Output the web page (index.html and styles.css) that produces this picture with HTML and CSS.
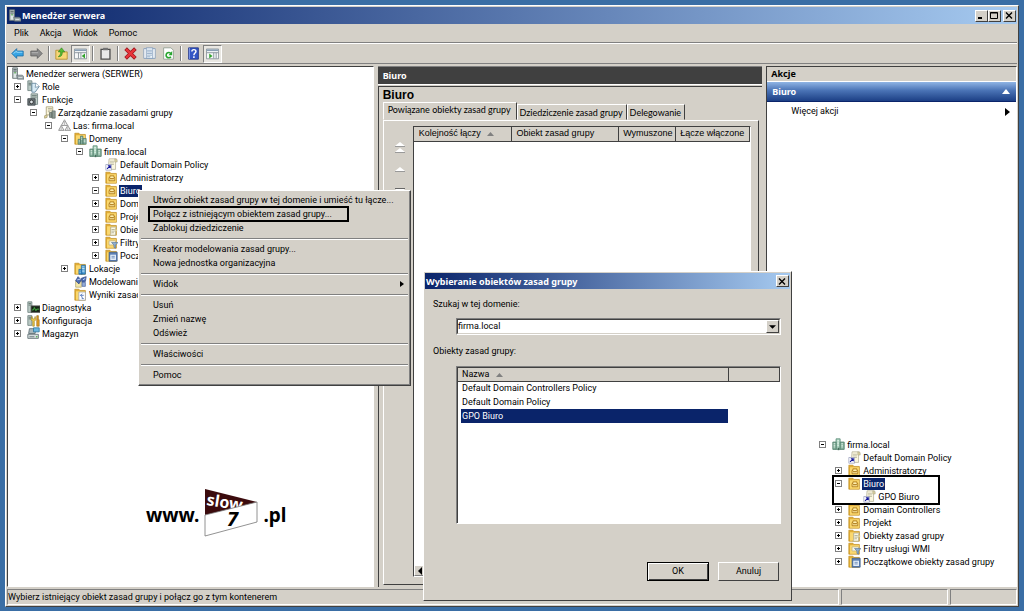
FILE: index.html
```html
<!DOCTYPE html>
<html lang="pl">
<head>
<meta charset="utf-8">
<title>Menedżer serwera</title>
<link rel="stylesheet" href="styles.css">
</head>
<body>
<svg class="defs" aria-hidden="true">
  <symbol id="server" viewBox="0 0 16 16"><path d="M2 1h6v13H2z" fill="#b9c3c4" stroke="#6b7778"/><path d="M3 3h4M3 5h4" stroke="#4d5a5c"/><path d="M3.500 8h3v5h-3z" fill="#dfe7e6"/><path d="M7 10l7 0 2 2v3H8z" fill="#9aa5a8" stroke="#59656a" stroke-width=".7"/><path d="M9 13h5" stroke="#e8eded"/><circle cx="5" cy="7" r="1" fill="#55b24a"/></symbol>
  <symbol id="role" viewBox="0 0 16 16"><path d="M1 1h5v12H1z" fill="#b9c9c4" stroke="#6f8380"/><path d="M2 4h3M2 6h3" stroke="#51635f"/><path d="M6 4h5l4 4-5 7H6z" fill="#d8ebf5" stroke="#5c7f96"/><path d="M11 4l-1 5 5-1" fill="#fff" stroke="#5c7f96" stroke-width=".8"/></symbol>
  <symbol id="feature" viewBox="0 0 16 16"><path d="M5 1h8v13H5z" fill="#c1cec9" stroke="#6f8380"/><path d="M6 3h6M6 5h6" stroke="#64756f"/><path d="M1 7h9v8H1z" fill="#6a7377" stroke="#3d464a"/><circle cx="5.500" cy="11" r="2.300" fill="#dfe6e8" stroke="#222"/></symbol>
  <symbol id="gpm" viewBox="0 0 16 16"><path d="M4 1h8v10H4z" fill="#fdf8dd" stroke="#a59d74"/><path d="M6 3h5M6 5h5M6 7h3" stroke="#a9a58c"/><path d="M2 12l3-1v3l-3 1z" fill="#e8dc9c" stroke="#a59d74"/><path d="M8 8h3v6H8zM11 6h4v9h-4z" fill="#8d9a94" stroke="#59665f" stroke-width=".8"/></symbol>
  <symbol id="forest" viewBox="0 0 16 16"><path d="M8 1l4 7H4zM4 8l3.500 6H.800zM12 8l3.500 6H8.500z" fill="#eee" stroke="#858585"/><path d="M8 1v7M12 8v6M4 8v6" stroke="#b4b4b4"/></symbol>
  <symbol id="folder" viewBox="0 0 16 16"><path d="M1 3V1.500h5L7.500 3H14v12H1z" fill="#e3ae35" stroke="#bd8a1a" stroke-width=".8"/><path d="M2.500 4H13.500v10.500h-11z" fill="#fad870"/></symbol>
  <symbol id="domain" viewBox="0 0 16 16"><path d="M5 1h5v13H5z" fill="#a9d1bd" stroke="#5a8c76"/><path d="M1 5h4v9H1zM10 5h5v9h-5z" fill="#86b29d" stroke="#507c69"/><path d="M6.500 3h2M6.500 5h2M6.500 7h2M6.500 9h2M2 7h2M2 9h2M2 11h2M11.500 7h2M11.500 9h2M11.500 11h2" stroke="#eefaf2"/><path d="M7 12h2v3H7z" fill="#466c5c"/></symbol>
  <symbol id="domains" viewBox="0 0 16 16"><use href="#folder"/><path d="M8 5h3v10H8zM5 9h3v6H5zM11 8h4v7h-4z" fill="#83ad9b" stroke="#4f7766" stroke-width=".8"/><path d="M9 7h1M9 9h1M12 10h2M12 12h2M6 11h1" stroke="#effaf3"/></symbol>
  <symbol id="link" viewBox="0 0 16 16"><path d="M5 1h9l-1 3v10H4z" fill="#fbf7df" stroke="#a9a488" stroke-width=".8"/><path d="M12 1l3 1v3h-3z" fill="#d7ce9c" stroke="#a9a488" stroke-width=".6"/><path d="M6 4h5M6 6h5M6 8h5" stroke="#b9b69f"/><path d="M1 8h7v7H1z" fill="#fff" stroke="#8c93b5" stroke-width=".8"/><path d="M2.500 13.500L6 10M3.500 9.500h3v3" fill="none" stroke="#15189b" stroke-width="1.400"/></symbol>
  <symbol id="ou" viewBox="0 0 16 16"><use href="#folder"/><path d="M6 6h5v2h1v4H5V8h1z" fill="#fff0ad" stroke="#a8700c"/><path d="M6 9.500h5" stroke="#a8700c" stroke-width="1.300"/></symbol>
  <symbol id="gpofolder" viewBox="0 0 16 16"><use href="#folder"/><path d="M7 5h7l-1 2v8H6l1-2z" fill="#fcf9e4" stroke="#9f9a80" stroke-width=".8"/><path d="M8 8h4M8 10h4M8 12h3" stroke="#aaa791"/><path d="M12 8h3v2h-3z" fill="#ddd09a"/></symbol>
  <symbol id="wmi" viewBox="0 0 16 16"><use href="#folder"/><path d="M5 6h8v5H5z" fill="#f9f7e4" stroke="#aaa27a" stroke-width=".7"/><path d="M8 8h8l-3 3v4l-2-1v-3z" fill="#8eaed1" stroke="#4d6d93" stroke-width=".7"/></symbol>
  <symbol id="starter" viewBox="0 0 16 16"><use href="#folder"/><path d="M5 4h10v11H5z" fill="#5b7fb4" stroke="#33547f" stroke-width=".8"/><path d="M6.500 7h7v6.500h-7z" fill="#e8f1fa"/><path d="M8 9h4M8 11h4" stroke="#5b7fb4"/></symbol>
  <symbol id="sites" viewBox="0 0 16 16"><use href="#folder"/><path d="M9 4h5v11H9zM6 9h4v6H6z" fill="#3d93cf" stroke="#2268a0" stroke-width=".8"/><path d="M10 6h3M10 8h3M10 10h3M10 12h3M7 11h1M7 13h1" stroke="#d5efff"/></symbol>
  <symbol id="model" viewBox="0 0 16 16"><path d="M2 7h7v8H2z" fill="#f3e7a8" stroke="#a59a61" stroke-width=".8"/><path d="M5 2l4 4-3 5-4-4zM9 4l6-2-1 6-4 1z" fill="#4a6bb1" stroke="#283f7d" stroke-width=".8"/><path d="M10 9h4v5h-4z" fill="#93acd8" stroke="#455f9b" stroke-width=".8"/><path d="M4 6l4-1M11 6l3-2" stroke="#d8e4ff"/></symbol>
  <symbol id="results" viewBox="0 0 16 16"><use href="#folder"/><path d="M6 5h8v10H6z" fill="#fff" stroke="#8f9bb0" stroke-width=".8"/><path d="M12 9H8M10 7l-2 2 2 2v2h2" fill="none" stroke="#3b65b4"/></symbol>
  <symbol id="diag" viewBox="0 0 16 16"><path d="M1 1h5v13H1z" fill="#b9c9c4" stroke="#6f8380"/><path d="M2 3h3M2 5h3" stroke="#55665f"/><path d="M5 6h11v8H5z" fill="#172417" stroke="#555"/><path d="M6 11h2l1-3 2 4 1-2h3" fill="none" stroke="#50c94d"/></symbol>
  <symbol id="config" viewBox="0 0 16 16"><path d="M1 2h5v12H1z" fill="#b9c9c4" stroke="#6f8380"/><path d="M2 4h3M2 6h3" stroke="#55665f"/><path d="M6 3l1 3h2l1-3 1 4-2 2v6H7V9L5 7z" fill="#eac94b" stroke="#9a7a12" stroke-width=".7"/><path d="M12 2h2v5h1v8h-3V7h0z" fill="#e39c22" stroke="#8f6311" stroke-width=".7"/></symbol>
  <symbol id="storage" viewBox="0 0 16 16"><path d="M3 2h8l-1 6H2z" fill="#a9b7bb" stroke="#5c6c71"/><path d="M8 1h7v5H8z" fill="#6cb7df" stroke="#33759a"/><path d="M1 9h13v5H1z" fill="#d4dcdd" stroke="#5c6c71"/><path d="M3 12h6" stroke="#59696e"/><circle cx="12" cy="12" r="1" fill="#4dab46"/></symbol>
</svg>

<div class="window">
  <header class="titlebar">
    <svg class="ico"><use href="#server"/></svg>
    <h1>Menedżer serwera</h1>
    <button class="cap" aria-label="Minimalizuj"><svg viewBox="0 0 10 9"><path d="M2 7h4" stroke="#000" stroke-width="2"/></svg></button>
    <button class="cap" aria-label="Maksymalizuj"><svg viewBox="0 0 10 9"><path d="M1.500 1.500h7v6h-7zM1.500 2h7" fill="none" stroke="#000"/></svg></button>
    <button class="cap cap-close" aria-label="Zamknij"><svg viewBox="0 0 10 9"><path d="M2 1.500l6 6M8 1.500l-6 6" stroke="#000" stroke-width="1.400"/></svg></button>
  </header>
  <nav class="menubar">
    <button>Plik</button><button>Akcja</button><button>Widok</button><button>Pomoc</button>
  </nav>
  <div class="toolbar">
    <button aria-label="Wstecz"><svg viewBox="0 0 16 16"><path d="M1 8l6-6v3h8v6H7v3z" fill="#36a4e4" stroke="#1a6ca6"/><path d="M3 8l4-3v1.500h7" fill="none" stroke="#a4defa"/></svg></button>
    <button aria-label="Dalej"><svg viewBox="0 0 16 16"><path d="M15 8L9 2v3H1v6h8v3z" fill="#8c8c8c" stroke="#5e5e5e"/><path d="M2 7h8" stroke="#bbb"/></svg></button>
    <i class="sep"></i>
    <button aria-label="W górę"><svg viewBox="0 0 16 16"><path d="M1 4h5l2 2h7v9H1z" fill="#f7d777" stroke="#b58d28"/><path d="M4 12c4 0 5-2 5-6h3L8 1 4 6h3c0 3-1 4-3 6z" fill="#57bc35" stroke="#2d7d18" stroke-width=".7"/></svg></button>
    <button class="on" aria-label="Drzewo konsoli"><svg viewBox="0 0 16 16"><path d="M.500 2.500h15v12H.500z" fill="#f5f7f8" stroke="#7d8890"/><path d="M1 4h14" stroke="#8aa0b6" stroke-width="2"/><path d="M1 7h14M5.500 7v7M8.500 7v7" stroke="#7d8890"/><path d="M13.500 8v6l-4-3z" fill="#31a32c"/></svg></button>
    <i class="sep"></i>
    <button aria-label="Kopiuj"><svg viewBox="0 0 16 16"><path d="M2.500 3h11v12h-11z" fill="#e9e9e9" stroke="#4d4d4d" stroke-width="1.600"/><path d="M5 1h6v3H5z" fill="#737373"/></svg></button>
    <i class="sep"></i>
    <button aria-label="Usuń"><svg viewBox="0 0 16 16"><path d="M2 2l12 12M14 2L2 14" stroke="#94131a" stroke-width="4.500"/><path d="M2.500 2.500l11 11M13.500 2.500l-11 11" stroke="#e8353a" stroke-width="3"/></svg></button>
    <button aria-label="Właściwości"><svg viewBox="0 0 16 16"><path d="M1 2h14v12H1z" fill="#fff" stroke="#7e98b6"/><path d="M4 1h8v13H4z" fill="#eef5fb" stroke="#7e98b6"/><path d="M5 4h6M5 6h6M5 8h6M5 10h6M5 12h4" stroke="#8da5c1"/></svg></button>
    <button aria-label="Odśwież"><svg viewBox="0 0 16 16"><path d="M2 1h9l3 3v11H2z" fill="#fff" stroke="#8b9a8b"/><path d="M11 8a3.300 3.300 0 1 0 0 4" fill="none" stroke="#28a52f" stroke-width="2"/><path d="M12.500 5v5H8z" fill="#28a52f"/></svg></button>
    <i class="sep"></i>
    <button aria-label="Pomoc"><svg viewBox="0 0 16 16"><path d="M2 1h12v14H2z" fill="#3457c5" stroke="#1b2e83"/><path d="M3 1v14" stroke="#8ea6f3"/><path d="M6 5.500c0-3 5-3 5 0 0 2-2.500 2-2.500 4.500M8.500 11.500v2" fill="none" stroke="#fff" stroke-width="1.800"/></svg></button>
    <button class="on" aria-label="Okienko akcji"><svg viewBox="0 0 16 16"><path d="M.500 2.500h15v12H.500z" fill="#f5f7f8" stroke="#7d8890"/><path d="M1 4h14" stroke="#8aa0b6" stroke-width="2"/><path d="M1 7h14M9.500 7v7M12.500 7v7" stroke="#7d8890"/><path d="M4 8v6l4-3z" fill="#31a32c"/></svg></button>
  </div>

  <main class="panes">
    <section class="pane tree-pane">
      <ul class="tree">
        <li class="l0"><svg class="ico"><use href="#server"/></svg><span>Menedżer serwera (SERWER)</span></li>
        <li class="l1"><button class="ex plus" aria-label="Rozwiń"></button><svg class="ico"><use href="#role"/></svg><span>Role</span></li>
        <li class="l1"><button class="ex" aria-label="Zwiń"></button><svg class="ico"><use href="#feature"/></svg><span>Funkcje</span></li>
        <li class="l2"><button class="ex" aria-label="Zwiń"></button><svg class="ico"><use href="#gpm"/></svg><span>Zarządzanie zasadami grupy</span></li>
        <li class="l3"><button class="ex" aria-label="Zwiń"></button><svg class="ico"><use href="#forest"/></svg><span>Las: firma.local</span></li>
        <li class="l4"><button class="ex" aria-label="Zwiń"></button><svg class="ico"><use href="#domains"/></svg><span>Domeny</span></li>
        <li class="l5"><button class="ex" aria-label="Zwiń"></button><svg class="ico"><use href="#domain"/></svg><span>firma.local</span></li>
        <li class="l6"><i class="ex none"></i><svg class="ico"><use href="#link"/></svg><span>Default Domain Policy</span></li>
        <li class="l6"><button class="ex plus" aria-label="Rozwiń"></button><svg class="ico"><use href="#ou"/></svg><span>Administratorzy</span></li>
        <li class="l6"><button class="ex" aria-label="Zwiń"></button><svg class="ico"><use href="#ou"/></svg><span class="sel">Biuro</span></li>
        <li class="l6"><button class="ex plus" aria-label="Rozwiń"></button><svg class="ico"><use href="#ou"/></svg><span>Domain Controllers</span></li>
        <li class="l6"><button class="ex plus" aria-label="Rozwiń"></button><svg class="ico"><use href="#ou"/></svg><span>Projekt</span></li>
        <li class="l6"><button class="ex plus" aria-label="Rozwiń"></button><svg class="ico"><use href="#gpofolder"/></svg><span>Obiekty zasad grupy</span></li>
        <li class="l6"><button class="ex plus" aria-label="Rozwiń"></button><svg class="ico"><use href="#wmi"/></svg><span>Filtry usługi WMI</span></li>
        <li class="l6"><button class="ex plus" aria-label="Rozwiń"></button><svg class="ico"><use href="#starter"/></svg><span>Początkowe obiekty zasad grupy</span></li>
        <li class="l4"><button class="ex plus" aria-label="Rozwiń"></button><svg class="ico"><use href="#sites"/></svg><span>Lokacje</span></li>
        <li class="l4"><i class="ex none"></i><svg class="ico"><use href="#model"/></svg><span>Modelowanie zasad grupy</span></li>
        <li class="l4"><i class="ex none"></i><svg class="ico"><use href="#results"/></svg><span>Wyniki zasad grupy</span></li>
        <li class="l1"><button class="ex plus" aria-label="Rozwiń"></button><svg class="ico"><use href="#diag"/></svg><span>Diagnostyka</span></li>
        <li class="l1"><button class="ex plus" aria-label="Rozwiń"></button><svg class="ico"><use href="#config"/></svg><span>Konfiguracja</span></li>
        <li class="l1"><button class="ex plus" aria-label="Rozwiń"></button><svg class="ico"><use href="#storage"/></svg><span>Magazyn</span></li>
      </ul>
      <div class="logo">
        <span>www.</span>
        <svg viewBox="0 0 54 50"><path d="M1 1l52 13v2L1 27z" fill="#3b0b0d"/><text class="logo-slow" x="2" y="17" transform="rotate(9 2 17)">slow</text><path d="M1 27l52-13v20L1 48z" fill="#fff" stroke="#777" stroke-width=".8"/><text class="logo-seven" x="23" y="38">7</text></svg>
        <span>.pl</span>
      </div>
    </section>

    <section class="center">
      <h2 class="dark">Biuro</h2>
      <div class="detail">
        <h3>Biuro</h3>
        <div class="tabs" role="tablist">
          <button class="tab active" role="tab">Powiązane obiekty zasad grupy</button>
          <button class="tab" role="tab">Dziedziczenie zasad grupy</button>
          <button class="tab" role="tab">Delegowanie</button>
        </div>
        <div class="tabpage">
          <div class="movers">
            <button aria-label="Na początek"><svg viewBox="0 0 12 12"><path d="M1 5l5-4 5 4zM1 11l5-4 5 4z" fill="#fff"/><path d="M1 5.500h10M1 11.500h10" stroke="#999"/></svg></button>
            <button aria-label="W górę"><svg viewBox="0 0 12 12"><path d="M1 8l5-4 5 4z" fill="#fff"/><path d="M1 8.500h10" stroke="#999"/></svg></button>
            <button aria-label="W dół"><svg viewBox="0 0 12 12"><path d="M1 3.500h10" stroke="#666"/><path d="M1 4h10l-5 4z" fill="#fff"/></svg></button>
          </div>
          <div class="list">
            <table>
              <thead><tr><th class="c1">Kolejność łączy <svg class="sort" viewBox="0 0 7 4"><path d="M0 4l3.500-4L7 4z"/></svg></th><th class="c2">Obiekt zasad grupy</th><th class="c3">Wymuszone</th><th class="c4">Łącze włączone</th></tr></thead>
            </table>
            <div class="scroll"><button aria-label="Przewiń w lewo"><svg viewBox="0 0 8 8"><path d="M6 0v8L2 4z"/></svg></button></div>
          </div>
        </div>
      </div>
    </section>

    <section class="pane actions">
      <h2 class="actions-head">Akcje</h2>
      <h3 class="actions-title">Biuro<svg viewBox="0 0 8 5"><path d="M0 5l4-5 4 5z" fill="#fff"/></svg></h3>
      <button class="more">Więcej akcji<svg viewBox="0 0 5 8"><path d="M0 0l5 4-5 4z"/></svg></button>
      <ul class="tree result">
        <li class="r0"><button class="ex" aria-label="Zwiń"></button><svg class="ico"><use href="#domain"/></svg><span>firma.local</span></li>
        <li class="r1"><i class="ex none"></i><svg class="ico"><use href="#link"/></svg><span>Default Domain Policy</span></li>
        <li class="r1"><button class="ex plus" aria-label="Rozwiń"></button><svg class="ico"><use href="#ou"/></svg><span>Administratorzy</span></li>
        <li class="framed">
          <ul>
            <li class="r1"><button class="ex" aria-label="Zwiń"></button><svg class="ico"><use href="#ou"/></svg><span class="sel">Biuro</span></li>
            <li class="r2"><i class="ex none"></i><svg class="ico"><use href="#link"/></svg><span>GPO Biuro</span></li>
          </ul>
        </li>
        <li class="r1"><button class="ex plus" aria-label="Rozwiń"></button><svg class="ico"><use href="#ou"/></svg><span>Domain Controllers</span></li>
        <li class="r1"><button class="ex plus" aria-label="Rozwiń"></button><svg class="ico"><use href="#ou"/></svg><span>Projekt</span></li>
        <li class="r1"><button class="ex plus" aria-label="Rozwiń"></button><svg class="ico"><use href="#gpofolder"/></svg><span>Obiekty zasad grupy</span></li>
        <li class="r1"><button class="ex plus" aria-label="Rozwiń"></button><svg class="ico"><use href="#wmi"/></svg><span>Filtry usługi WMI</span></li>
        <li class="r1"><button class="ex plus" aria-label="Rozwiń"></button><svg class="ico"><use href="#starter"/></svg><span>Początkowe obiekty zasad grupy</span></li>
      </ul>
    </section>
  </main>

  <footer class="status">
    <span class="grow">Wybierz istniejący obiekt zasad grupy i połącz go z tym kontenerem</span><span class="s2"></span><span class="s3"></span>
  </footer>
</div>

<ul class="context" role="menu">
  <li><button role="menuitem">Utwórz obiekt zasad grupy w tej domenie i umieść tu łącze...</button></li>
  <li class="marked"><button role="menuitem">Połącz z istniejącym obiektem zasad grupy...</button></li>
  <li><button role="menuitem">Zablokuj dziedziczenie</button></li>
  <li class="rule"></li>
  <li><button role="menuitem">Kreator modelowania zasad grupy...</button></li>
  <li><button role="menuitem">Nowa jednostka organizacyjna</button></li>
  <li class="rule"></li>
  <li><button role="menuitem">Widok<svg viewBox="0 0 4 6"><path d="M0 0l4 3-4 3z"/></svg></button></li>
  <li class="rule"></li>
  <li><button role="menuitem">Usuń</button></li>
  <li><button role="menuitem">Zmień nazwę</button></li>
  <li><button role="menuitem">Odśwież</button></li>
  <li class="rule"></li>
  <li><button role="menuitem">Właściwości</button></li>
  <li class="rule"></li>
  <li><button role="menuitem">Pomoc</button></li>
</ul>

<form class="dialog" role="dialog" aria-labelledby="dlg-title">
  <header class="titlebar dialog-bar">
    <h2 id="dlg-title">Wybieranie obiektów zasad grupy</h2>
    <button type="button" class="cap" aria-label="Zamknij"><svg viewBox="0 0 10 9"><path d="M2 1.500l6 6M8 1.500l-6 6" stroke="#000" stroke-width="1.400"/></svg></button>
  </header>
  <div class="dialog-body">
    <label for="domain-select">Szukaj w tej domenie:</label>
    <div class="combo"><select id="domain-select"><option>firma.local</option></select><span class="drop"><svg viewBox="0 0 8 4"><path d="M0 0h8L4 4z"/></svg></span></div>
    <p id="gpo-label">Obiekty zasad grupy:</p>
    <div class="gpo-list">
      <table aria-labelledby="gpo-label">
        <thead><tr><th class="g1">Nazwa <svg class="sort" viewBox="0 0 7 4"><path d="M0 4l3.500-4L7 4z"/></svg></th><th></th></tr></thead>
        <tbody>
          <tr><td>Default Domain Controllers Policy</td><td></td></tr>
          <tr><td>Default Domain Policy</td><td></td></tr>
          <tr class="chosen"><td>GPO Biuro</td><td></td></tr>
        </tbody>
      </table>
    </div>
    <div class="dialog-buttons"><button type="button" class="default">OK</button><button type="button">Anuluj</button></div>
  </div>
</form>
</body>
</html>
```
FILE: styles.css
```css
:root {
  --face: #d4d0c8;
  --navy: #0a246a;
  --dark: #404040;
  --shadow: #808080;
  --ui: Roboto, "Liberation Sans", sans-serif;
  --bold: "Noto Sans", "Open Sans", sans-serif;
  --classic: "Liberation Sans", Arial, sans-serif;
}
* { box-sizing: border-box; }
body {
  margin: 0;
  height: 100vh;
  padding: 5px 5px 4px;
  background: #3a6ea5;
  color: #000;
  font: 9px/13px var(--ui);
  position: relative;
}
button, select { font: inherit; color: inherit; margin: 0; padding: 0; border: 0; background: none; border-radius: 0; }
h1, h2, h3, p, ul { margin: 0; padding: 0; }
ul { list-style: none; }
svg { display: block; flex: none; }
table { border-collapse: collapse; width: 100%; table-layout: fixed; }
th { font-weight: normal; text-align: left; }
.defs { position: absolute; width: 0; height: 0; }

.window {
  height: 100%;
  display: flex;
  flex-direction: column;
  background: var(--face);
  border: 1px solid;
  border-color: #fff var(--dark) var(--dark) #fff;
  padding: 1px 1px 1px 1px;
}
.titlebar {
  display: flex;
  align-items: center;
  height: 17px;
  flex: none;
  padding: 0 1px;
  background: linear-gradient(90deg, #0a246a, #a6caf0);
  color: #fff;
}
.titlebar h1, .titlebar h2 { flex: 1; font: bold 9px/13px var(--bold); }
.titlebar .ico { margin-right: 1px; }
.ico { width: 13px; height: 13px; }
.cap {
  width: 13px;
  height: 12px;
  background: var(--face);
  border: 1px solid;
  border-color: #fff var(--dark) var(--dark) #fff;
}
.cap svg { width: 10px; height: 9px; }
.cap-close { margin-left: 2px; }
.menubar {
  display: flex;
  gap: 11px;
  height: 19px;
  flex: none;
  padding: 0 7px;
  border-bottom: 1px solid var(--shadow);
}
.toolbar {
  display: flex;
  align-items: center;
  height: 21px;
  flex: none;
  padding: 0 1px;
  border-top: 1px solid #fff;
  border-bottom: 1px solid var(--shadow);
}
.toolbar button { width: 19px; height: 18px; display: grid; place-items: center; }
.toolbar svg { width: 13px; height: 13px; }
.toolbar .on { border: 1px solid; border-color: var(--shadow) #fff #fff var(--shadow); background: #e9e7e2; }
.sep { width: 2px; height: 15px; margin: 0 2px; border-left: 1px solid var(--shadow); border-right: 1px solid #fff; }

.panes {
  flex: 1;
  min-height: 0;
  display: grid;
  grid-template-columns: 367fr 385fr 251fr;
  gap: 4px;
  padding-top: 2px;
}
.pane {
  display: flex;
  flex-direction: column;
  min-width: 0;
  background: #fff;
  border: 1px solid;
  border-color: var(--dark) #fff #fff var(--dark);
  overflow: hidden;
}
.tree li { display: flex; align-items: center; height: 13px; white-space: nowrap; }
.tree span { padding: 0 1px; margin-left: 1px; line-height: 12px; }
.tree .sel { background: var(--navy); color: #fff; }
.ex {
  flex: none;
  width: 7px;
  height: 7px;
  margin-right: 6px;
  border: 1px solid var(--shadow);
  background: linear-gradient(#000, #000) center / 3px 1px no-repeat;
}
.ex.plus {
  background: linear-gradient(#000, #000) center / 3px 1px no-repeat, linear-gradient(#000, #000) center / 1px 3px no-repeat;
}
.ex.none { visibility: hidden; }
.l0 { padding-left: 3px; }
.l1 { padding-left: 6px; }
.l2 { padding-left: 22px; }
.l3 { padding-left: 37px; }
.l4 { padding-left: 53px; }
.l5 { padding-left: 68px; }
.l6 { padding-left: 84px; }
.logo {
  display: flex;
  align-items: center;
  gap: 5px;
  margin-top: auto;
  padding: 0 0 48px 138px;
  font: bold 19px/24px var(--bold);
}
.logo span { padding-top: 4px; }
.logo svg { width: 54px; height: 50px; }
.logo-slow { font: bold 16px var(--bold); fill: #fff; }
.logo-seven { font: italic bold 20px var(--bold); fill: #000; }

.center { display: flex; flex-direction: column; min-width: 0; }
.dark { background: var(--dark); color: #fff; font: bold 9px/17px var(--bold); padding-left: 5px; border-top: 1px solid var(--shadow); border-bottom: 1px solid #fff; }
.detail {
  flex: 1;
  display: flex;
  flex-direction: column;
  margin-top: 1px;
  padding: 1px 3px 2px 4px;
  border-top: 1px solid var(--dark);
  border-left: 1px solid var(--dark);
}
.detail h3 { font: bold 12px/14px var(--classic); }
.tabs { display: flex; align-items: flex-end; height: 18px; font: 9px/13px Lato, var(--classic); }
.tab { height: 16px; padding: 0 3px 0 2px; border: 1px solid; border-color: #fff var(--dark) transparent #fff; white-space: nowrap; }
.tab.active { height: 18px; padding: 0 5px 3px 4px; }
.tabpage {
  flex: 1;
  display: flex;
  padding: 5px 7px 7px 0;
  border: 1px solid;
  border-color: #fff var(--dark) var(--dark) #fff;
}
.movers { width: 29px; display: flex; flex-direction: column; align-items: center; gap: 10px; padding: 15px 0 0 4px; }
.movers svg { width: 12px; height: 12px; }
.list {
  flex: 1;
  display: flex;
  flex-direction: column;
  justify-content: space-between;
  background: #fff;
  border: 1px solid;
  border-color: var(--dark) #fff #fff var(--dark);
  font-family: var(--classic);
}
.list th, .gpo-list th {
  height: 14px;
  padding: 0 5px;
  background: var(--face);
  border-right: 1px solid var(--dark);
  border-bottom: 1px solid var(--dark);
  line-height: 13px;
  white-space: nowrap;
}
.gpo-list th { height: 13px; line-height: 12px; padding: 0 4px; }
.sort { display: inline-block; width: 7px; height: 4px; margin-left: 4px; vertical-align: middle; fill: var(--shadow); }
.c1 { width: 29%; }
.c2 { width: 32%; }
.c3 { width: 17%; }
.list .c3, .list .c4 { padding: 0 0 0 4px; }
.scroll { background: #ebe9e5; }
.scroll button { display: grid; place-items: center; width: 12px; height: 11px; background: var(--face); border: 1px solid; border-color: #fff var(--shadow) var(--shadow) #fff; }
.scroll svg { width: 8px; height: 8px; }

.actions-head { background: var(--face); font: bold 9px/14px var(--bold); padding-left: 4px; border-bottom: 1px solid #fff; }
.actions-title {
  display: flex;
  align-items: center;
  justify-content: space-between;
  padding: 0 6px 0 5px;
  background: linear-gradient(#8fb4e4, #4a73b5 45%, #1c3f85);
  border-bottom: 1px solid var(--navy);
  color: #fff;
  font: bold 9px/19px var(--bold);
}
.actions-title svg { width: 8px; height: 5px; }
.more { display: flex; align-items: center; justify-content: space-between; padding: 3px 6px 3px 24px; }
.more svg { width: 5px; height: 8px; }
.result { margin-top: auto; padding-bottom: 18px; }
.tree .framed { display: block; height: 26px; position: relative; }
.framed::after { content: ""; position: absolute; inset: -2px auto -2px 65px; width: 104px; border: 2px solid #000; pointer-events: none; }
.r0 { padding-left: 52px; }
.r1 { padding-left: 68px; }
.r2 { padding-left: 83px; }

.status { flex: none; display: flex; gap: 2px; padding-top: 2px; }
.status span { height: 16px; border: 1px solid; border-color: var(--shadow) #fff #fff var(--shadow); line-height: 14px; white-space: nowrap; }
.status .grow { flex: 1; }
.s2 { width: 107px; }
.s3 { width: 67px; }

.context {
  position: absolute;
  left: 138px;
  top: 190px;
  width: 273px;
  padding: 2px 2px 3px;
  background: var(--face);
  border: 1px solid;
  border-color: #fff var(--dark) var(--dark) #fff;
  box-shadow: inset -1px -1px 0 var(--shadow);
}
.context button { display: flex; align-items: center; justify-content: space-between; width: 100%; height: 14px; padding: 0 4px 0 12px; white-space: nowrap; }
.context button svg { width: 4px; height: 6px; }
.rule { height: 7px; border-top: 3px solid transparent; border-bottom: 2px solid transparent; background: linear-gradient(var(--shadow) 50%, #fff 50%) padding-box; }
.marked { position: relative; }
.marked::after { content: ""; position: absolute; inset: -1px 59px -1px 7px; border: 2px solid #000; pointer-events: none; }

.dialog {
  position: absolute;
  left: 423px;
  top: 271px;
  width: 369px;
  background: var(--face);
  border: 1px solid;
  border-color: #fff var(--dark) var(--dark) #fff;
  padding: 1px;
}
.dialog-bar { height: 16px; }
.dialog-body { padding: 9px 9px 18px 8px; }
.dialog-body label, .dialog-body p { display: block; line-height: 13px; }
.combo {
  position: relative;
  margin: 7px 0 10px 23px;
  border: 1px solid;
  border-color: var(--shadow) #fff #fff var(--shadow);
}
.combo select { display: block; width: 100%; height: 15px; padding: 0; appearance: none; background: #fff; border: 1px solid; border-color: var(--dark) var(--face) var(--face) var(--dark); }
.drop { position: absolute; inset: 1px 1px 1px auto; width: 13px; display: grid; place-items: center; background: var(--face); border: 1px solid; border-color: #fff var(--dark) var(--dark) #fff; pointer-events: none; }
.drop svg { width: 7px; height: 4px; }
.gpo-list {
  margin: 8px 0 38px 23px;
  height: 158px;
  background: #fff;
  border: 1px solid;
  border-color: var(--shadow) #fff #fff var(--shadow);
  box-shadow: inset 1px 1px 0 var(--dark);
  padding: 1px 0 0 1px;
}
.g1 { width: 84%; }
.gpo-list td { height: 14px; padding: 0 4px; line-height: 13px; }
.chosen td:first-child { background: var(--navy) content-box; color: #fff; padding: 0 0 0 3px; text-indent: 1px; }
.dialog-buttons { display: flex; justify-content: flex-end; gap: 9px; padding-right: 2px; }
.dialog-buttons button { width: 61px; height: 19px; border: 1px solid; border-color: #fff var(--dark) var(--dark) #fff; }
.dialog-buttons .default { width: 62px; border-color: #000; box-shadow: inset 1px 1px 0 #fff, inset -1px -1px 0 var(--dark); }
```
